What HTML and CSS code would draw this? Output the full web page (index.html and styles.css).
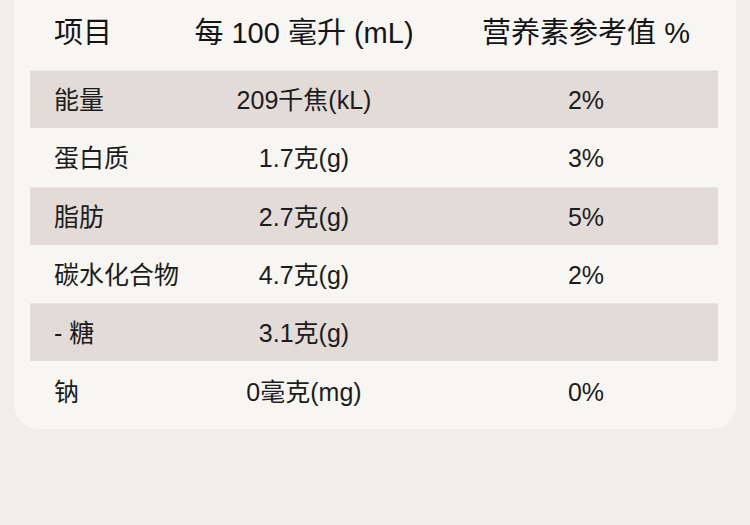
FILE: index.html
```html
<!DOCTYPE html>
<html lang="zh">
<head>
<meta charset="utf-8">
<link rel="stylesheet" href="styles.css">
</head>
<body>
<div class="card">
  <div class="row head">
    <div class="c1">项目</div>
    <div class="c2">每 100 毫升 (mL)</div>
    <div class="c3">营养素参考值 %</div>
  </div>
  <div class="row shade">
    <div class="c1">能量</div>
    <div class="c2">209千焦(kL)</div>
    <div class="c3">2%</div>
  </div>
  <div class="row">
    <div class="c1">蛋白质</div>
    <div class="c2">1.7克(g)</div>
    <div class="c3">3%</div>
  </div>
  <div class="row shade">
    <div class="c1">脂肪</div>
    <div class="c2">2.7克(g)</div>
    <div class="c3">5%</div>
  </div>
  <div class="row">
    <div class="c1">碳水化合物</div>
    <div class="c2">4.7克(g)</div>
    <div class="c3">2%</div>
  </div>
  <div class="row shade">
    <div class="c1">- 糖</div>
    <div class="c2">3.1克(g)</div>
    <div class="c3"></div>
  </div>
  <div class="row">
    <div class="c1">钠</div>
    <div class="c2">0毫克(mg)</div>
    <div class="c3">0%</div>
  </div>
</div>
</body>
</html>
```
FILE: styles.css
```css
html, body {
  margin: 0;
  padding: 0;
}
body {
  background: #f1ede7;
  width: 750px;
  height: 525px;
  font-family: "Liberation Sans", "Noto Sans CJK SC", sans-serif;
  color: #1c1c1c;
}
.card {
  margin-left: 14px;
  width: 688px;
  padding: 0 18px 9px 16px;
  background: #f8f6f2;
  border-radius: 0 0 24px 24px;
}
.row {
  display: grid;
  grid-template-columns: 160px 228px 1fr;
  align-items: center;
  height: 58.3px;
  font-size: 25px;
  line-height: 1.2;
}
.row.head {
  height: 70px;
  font-size: 29px;
  font-weight: 400;
  color: #141414;
}
.row.shade {
  background: #e2dbd8;
  box-shadow: inset 0 1px 0 #ebe6e3;
}
.c1 {
  padding-left: 24px;
}
.c2 {
  text-align: center;
}
.c3 {
  text-align: center;
  padding-left: 36px;
}
.head > div {
  padding-bottom: 4px;
}
.row:not(.head) > div {
  padding-top: 2px;
}
```
